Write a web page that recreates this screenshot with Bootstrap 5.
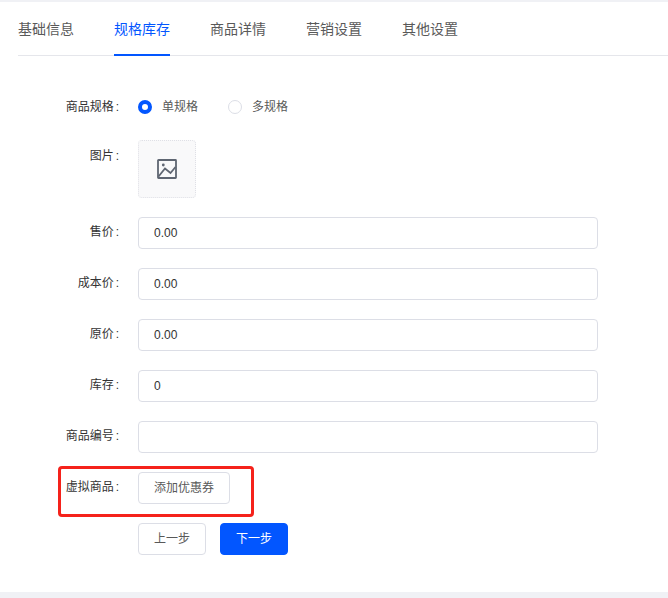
<!doctype html>
<html lang="zh">
<head>
<meta charset="utf-8">
<title>规格库存</title>
<link href="https://cdn.jsdelivr.net/npm/bootstrap@5.3.0/dist/css/bootstrap.min.css" rel="stylesheet">
<style>
html,body{height:100%;}
body{background:#f0f1f5;font-family:"Liberation Sans","Noto Sans CJK SC",sans-serif;font-size:12px;color:#333;overflow:hidden;}
.panel{background:#fff;margin-top:2px;height:590px;padding:0 0 0 18px;}
.tabs{height:54px;border-bottom:1px solid #e5e6eb;gap:40px;flex-wrap:nowrap;}
.tabs .nav-link{padding:0;height:54px;line-height:54px;font-size:14px;color:#595959;background:none;border:0;border-radius:0;}
.tabs .nav-link.active{color:#0256ff;background:none;border-bottom:2px solid #0256ff;}
.form-area{padding-top:36px;position:relative;width:580px;}
.frow{display:flex;margin-bottom:19px;}
.frow .lbl{width:102px;flex:none;text-align:right;line-height:30px;font-size:12px;color:#333;}
.frow .lbl span{margin-left:2px;margin-right:1px;}
.frow .ctl{margin-left:18px;width:460px;flex:none;}
.frow.radio{margin-bottom:18px;height:30px;align-items:center;}
.frow.radio .ctl{display:flex;gap:30px;}
.radio-item{display:flex;align-items:center;gap:10px;color:#595959;font-size:12px;line-height:30px;}
.dot{width:14px;height:14px;border-radius:50%;border:1px solid #dcdee6;background:#fff;display:block;flex:none;}
.dot.on{border:4px solid #0256ff;}
.lbl.pic-lbl{padding-top:1px;}
.pic{width:58px;height:58px;border:1px dotted #dfe0e6;border-radius:4px;background:#f9f9fa;display:flex;align-items:center;justify-content:center;}
.frow .form-control{height:32px;min-height:32px;padding:0 15px;font-size:12px;color:#333;border:1px solid #dcdee6;border-radius:4px;}
.btn-x{height:32px;padding:0 15px;font-size:12px;line-height:30px;border-radius:4px;border:1px solid #dcdee6;background:#fff;color:#595959;}
.btn-next{background:#0256ff;border-color:#0256ff;color:#fff;}
.actions{display:flex;gap:14px;margin-left:120px;}
.annot{position:absolute;left:40px;top:410px;width:196px;height:51px;border:3px solid #f5221b;border-radius:4px;pointer-events:none;}
</style>
</head>
<body>
<div class="panel">
  <ul class="nav tabs">
    <li class="nav-item"><a class="nav-link" href="#">基础信息</a></li>
    <li class="nav-item"><a class="nav-link active" href="#">规格库存</a></li>
    <li class="nav-item"><a class="nav-link" href="#">商品详情</a></li>
    <li class="nav-item"><a class="nav-link" href="#">营销设置</a></li>
    <li class="nav-item"><a class="nav-link" href="#">其他设置</a></li>
  </ul>
  <form class="form-area">
    <div class="frow radio">
      <div class="lbl">商品规格<span>:</span></div>
      <div class="ctl">
        <label class="radio-item"><span class="dot on"></span>单规格</label>
        <label class="radio-item"><span class="dot"></span>多规格</label>
      </div>
    </div>
    <div class="frow">
      <div class="lbl pic-lbl">图片<span>:</span></div>
      <div class="ctl">
        <div class="pic">
          <svg width="22" height="22" viewBox="0 0 22 22" fill="none" stroke="#5f6672" stroke-width="1.8">
            <rect x="2" y="2" width="18" height="18" rx="0.5"/>
            <path d="M2.5 18.5 L9 10.5 L14.5 15 L19.5 9"/>
            <circle cx="7.3" cy="7" r="1.4" fill="#5f6672" stroke="none"/>
          </svg>
        </div>
      </div>
    </div>
    <div class="frow"><div class="lbl">售价<span>:</span></div><div class="ctl"><input class="form-control" value="0.00"></div></div>
    <div class="frow"><div class="lbl">成本价<span>:</span></div><div class="ctl"><input class="form-control" value="0.00"></div></div>
    <div class="frow"><div class="lbl">原价<span>:</span></div><div class="ctl"><input class="form-control" value="0.00"></div></div>
    <div class="frow"><div class="lbl">库存<span>:</span></div><div class="ctl"><input class="form-control" value="0"></div></div>
    <div class="frow"><div class="lbl">商品编号<span>:</span></div><div class="ctl"><input class="form-control"></div></div>
    <div class="frow"><div class="lbl">虚拟商品<span>:</span></div><div class="ctl"><button type="button" class="btn btn-x">添加优惠券</button></div></div>
    <div class="actions">
      <button type="button" class="btn btn-x">上一步</button>
      <button type="button" class="btn btn-x btn-next">下一步</button>
    </div>
    <div class="annot"></div>
  </form>
</div>
<script src="https://cdn.jsdelivr.net/npm/bootstrap@5.3.0/dist/js/bootstrap.bundle.min.js"></script>
</body>
</html>
